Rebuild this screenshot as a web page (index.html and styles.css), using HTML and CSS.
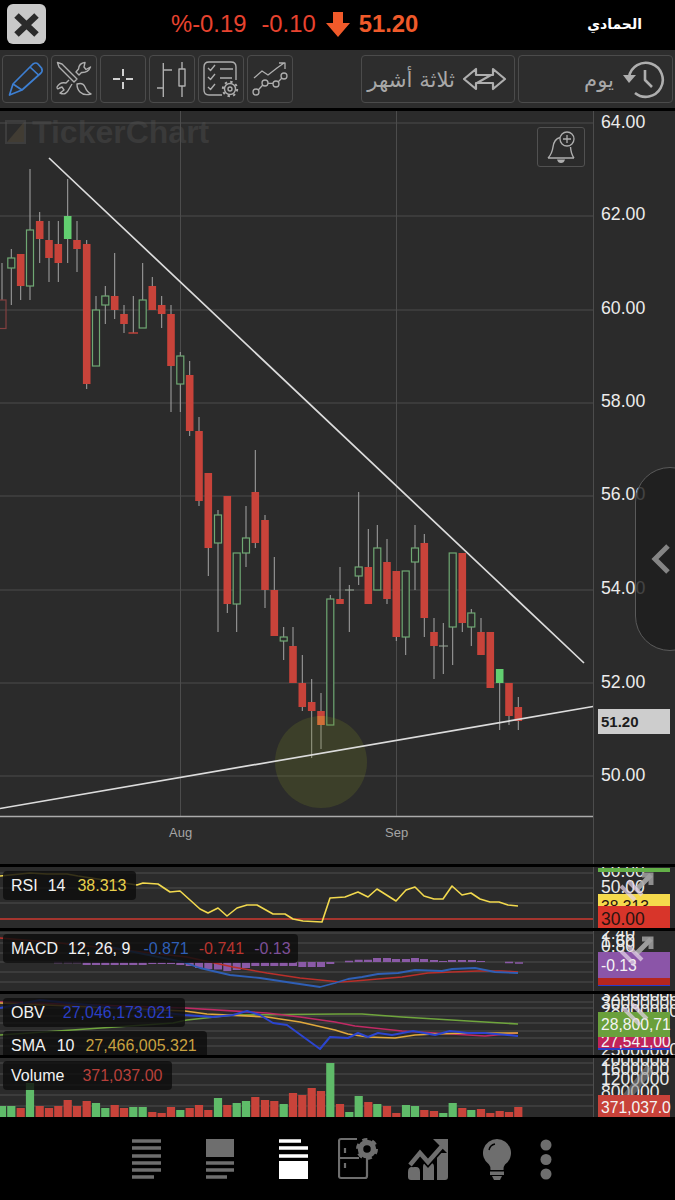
FILE: index.html
```html
<!DOCTYPE html>
<html lang="ar">
<head>
<meta charset="utf-8">
<title>TickerChart</title>
<link rel="stylesheet" href="styles.css">
</head>
<body>
<header class="quote-bar">
  <button class="close-btn" aria-label="close"><svg width="39" height="40" viewBox="7 4 39 40"><path class="close-x" d="M16.5 15.5 36.5 34.5M36.5 15.5 16.5 34.5"/></svg></button>
  <div class="quote">
    <span class="q-red">%-0.19</span>
    <span class="q-red">-0.10</span>
    <svg class="q-arrow" width="24" height="25" viewBox="326 13 24 25"><path class="fill-orange" d="M333 13H343V24H350L338 38 326 24H333Z"/></svg>
    <span class="q-last">51.20</span>
  </div>
  <div class="name">الحمادي</div>
</header>

<nav class="toolbar">
  <div class="tool"><svg width="46" height="48" viewBox="2 55 46 48"><path class="ic-blue" d="M9.5 95 13 84 33 64Q36 62 38 64L41.5 68Q43 71 41 73L22 90ZM13 84 22 90M30 67 38.5 75"/></svg></div>
  <div class="tool"><svg width="46" height="48" viewBox="51 55 46 48"><path class="ic" d="M57.5 62.5 62 64 77 79 74 82 59 67ZM77 84Q83 82 85 87 87 92 91 94 84 96 80 92 77 89 77 84ZM85 62.5Q79 63 78.5 69L76 72 79 75 81.5 72.5Q88 73 90.5 67L86 69.5 84 67ZM69 80 66 83Q60 81.5 57 87 57 90 59.5 88L62 87 64 90 60 93Q66 96 69 89L72 84"/></svg></div>
  <div class="tool"><svg width="46" height="48" viewBox="100 55 46 48"><path class="ic-w" d="M113 79H120M126 79H133M123 69V76M123 82V89"/></svg></div>
  <div class="tool"><svg width="46" height="48" viewBox="149 55 46 48"><path class="ic" d="M163.3 63V97M163.3 70H172M157 88H163.3M182 62V69M182 86V97"/><rect class="ic" x="179" y="69" width="6" height="17"/></svg></div>
  <div class="tool"><svg width="46" height="48" viewBox="198 55 46 48"><path class="ic" d="M222 95H209Q204 95 204 90V67Q204 62 209 62H231Q236 62 236 67V80M208 68 210.500 70.500 215 65M208 77 210.500 79.500 215 74M208 87 210.500 89.500 215 84M220 69H233M220 78H232"/><circle class="ic" cx="230" cy="89" r="5.500"/><circle class="gear-teeth" cx="230" cy="89" r="7.200"/><circle class="ic" cx="230" cy="89" r="2"/></svg></div>
  <div class="tool"><svg width="46" height="48" viewBox="247 55 46 48"><path class="ic-thin" d="M254 78 262 71 268 75 277 68 284 63M279 63H285V69M258.200 90 262.800 85M268 83.300H273M278 82 282 78"/><circle class="ic-thin" cx="256" cy="92" r="3"/><circle class="ic-thin" cx="265" cy="83" r="3"/><circle class="ic-thin" cx="276" cy="84" r="3"/><circle class="ic-thin" cx="284" cy="76" r="3"/></svg></div>
  <div class="tool tool-wide tool-range">
    <span class="tool-label">ثلاثة أشهر</span>
    <svg width="44" height="24" viewBox="464 67 44 24"><path class="ic ic-arrows" d="M465 79 477 69V75H494V69L506 79 494 89V83H477V89ZM478 83 492 75"/></svg>
  </div>
  <div class="tool tool-wide tool-period">
    <span class="tool-label">يوم</span>
    <svg width="44" height="40" viewBox="620 59 44 40"><path class="ic-heavy" d="M627 77A17 17 0 1 1 633 93M643 70V80L650 87"/><path class="fill-icon" d="M621 75H634L627 83Z"/></svg>
  </div>
</nav>

<main class="chart">
  <svg class="stage" width="675" height="753" viewBox="0 111 675 753">
    <text class="wm" x="32" y="143">TickerChart</text>
    <rect class="wm-box" x="6" y="121" width="19" height="22"/>
    <path class="wm-tri" d="M7 142 24 122V142Z"/>
    <path class="grid" d="M0 123H593M0 216H593M0 310H593M0 403H593M0 496H593M0 590H593M0 683H593M0 776H593M180.500 111V817M396.500 111V817M593.500 111V864"/>
    <path class="wick" d="M2 263V300M11.300 249V305M20.700 286V300M30 169V300M39.700 212V263M49 221V282M58.300 221V282M67.700 179V263M77 221V272M86.700 240V389M96 296V310M105.300 286V324M114.700 253V319M124 305V333M133.300 296V333M142.700 263V300M152.300 277V310M161.700 296V328M171 305V412M180.300 352V412M189.700 361V436M199 417V506M208.300 548V576M218 510V632M227.300 604V613M236.700 604V632M246 506V567M255.300 450V548M265 515V608M274.300 557V590M283.700 627V660M293 627V646M302.300 655V711M311.700 679V758M321 693V749M330.300 595V599M340 567V599M349.300 585V632M358.700 492V585M368.300 529V567M377.300 525V548M387 539V604M396.300 637V641M405.700 637V655M415 525V590M424.300 534V637M434 618V679M443.300 623V674M452.700 627V665M462.300 623V632M471.300 609V646M481 618V632M499.700 683V730M509 716V725M518.300 697V730"/>
    <rect class="hollow-red" x="-3" y="300" width="9" height="28.500"/>
    <g class="hollow">
      <rect x="7.800" y="258" width="7" height="10"/><rect x="26.500" y="230" width="7" height="56"/><rect x="92.500" y="310" width="7" height="56"/><rect x="101.800" y="296" width="7" height="9"/><rect x="139.200" y="300" width="7" height="28"/><rect x="176.800" y="356" width="7" height="28"/><rect x="214.500" y="515" width="7" height="28"/><rect x="233.200" y="553" width="7" height="51"/><rect x="242.500" y="538" width="7" height="15"/><rect x="280.200" y="637" width="7" height="4"/><rect x="326.800" y="599" width="7" height="126"/><rect x="355.200" y="567" width="7" height="9"/><rect x="373.800" y="548" width="7" height="42"/><rect x="402.200" y="571" width="7" height="66"/><rect x="411.500" y="548" width="7" height="14"/><rect x="449.200" y="553" width="7" height="74"/><rect x="467.800" y="613" width="7" height="14"/>
    </g>
    <path class="body-red" d="M20.700 254V286M39.700 221V239M49 240V258M58.300 244V263M77 240V249M86.700 244V384M114.700 296V310M124 314V324M152.300 286V310M161.700 305V314M171 314V366M189.700 375V431M199 431V501M208.300 473V548M227.300 496V604M255.300 492V543M265 520V590M274.300 590V636M293 646V683M302.300 683V707M311.700 702V711M321 711V716M340 599V604M368.300 567V604M387 562V599M396.300 571V637M424.300 543V618M434 632V646M462.300 553V623M481 632V655M490.300 632V688M509 683V716M518.300 707V721"/>
    <path class="body-lit" d="M321 716V725"/>
    <path class="body-green" d="M67.700 216V239M499.700 669V683"/>
    <path class="doji-red" d="M128.500 333H138"/>
    <path class="doji-green" d="M345 590H354M439 646H448"/>
    <circle class="marker" cx="321" cy="762" r="46"/>
    <path class="trend" d="M49 158 584 663M0 808.500 593 706.500"/>
    <path class="baseline" d="M0 816.500H593"/>
    <g class="y-label">
      <text x="601" y="128">64.00</text><text x="601" y="220">62.00</text><text x="601" y="314">60.00</text><text x="601" y="407">58.00</text><text x="601" y="500">56.00</text><text x="601" y="594">54.00</text><text x="601" y="688">52.00</text><text x="601" y="781">50.00</text>
    </g>
    <text class="x-label" x="169" y="837">Aug</text>
    <text class="x-label" x="385" y="837">Sep</text>
  </svg>
  <button class="bell" aria-label="alert"><svg width="46" height="38" viewBox="538 128 46 38"><path class="ic" d="M548 158Q552 154 553 147 554 139 560 137.500M560 158H548M574 158H560M574 158Q571 154 570.500 147"/><path class="fill-icon" d="M557 159.500H565Q564 163 561 163 558 163 557 159.500Z"/><circle class="ic-thin" cx="567" cy="139" r="7"/><path class="ic-thin" d="M563 139H571M567 135V143"/></svg></button>
  <div class="drawer"><svg width="20" height="32" viewBox="0 0 20 32"><path class="chev" d="M17 3 4 16 17 29"/></svg></div>
  <div class="last-tag">51.20</div>
</main>

<section class="panel panel-rsi">
  <svg width="675" height="61" viewBox="0 867 675 61">
    <path class="p-grid" d="M0 873H593M0 888H593M0 903H593M593.500 867V928"/>
    <path class="line-red" d="M0 919H593"/>
    <polyline class="line-yellow" points="0,876 20,874 30,873 47,874 67,874 78,876 137,885 143,883 158,884 170,892 180,891 200,909 208,913 218,908 227,916 237,908 247,905 257,905 273,914 285,914 293,919 303,921 322,922 330,898 345,897 358,892 368,897 377,889 396,901 406,890 415,887 424,896 434,899 443,899 452,886 462,895 471,893 480,899 490,902 499,902 508,905 518,906"/>
    <text class="a-text" x="601" y="877">60.00</text>
    <text class="a-text" x="601" y="893">50.00</text>
    <rect class="c-green" x="598" y="868" width="72" height="4"/>
    <rect class="c-yellow" x="598" y="894" width="72" height="12"/>
    <text class="a-box a-dark" x="601" y="912">38.313</text>
    <rect class="c-red" x="598" y="906" width="72" height="22"/>
    <text class="a-text a-dark" x="601" y="925">30.00</text>
    <g class="expand"><path class="exp-head" d="M642 875H651V885"/><path class="exp-line" d="M651 875 636 890"/><path class="exp-chev" d="M621 886 635 900M628 881 642 895"/></g>
  </svg>
  <div class="legend legend-rsi"><span>RSI</span><span>14</span><span class="v-yellow">38.313</span></div>
</section>

<section class="panel panel-macd">
  <svg width="675" height="60" viewBox="0 931 675 60">
    <path class="p-grid" d="M0 933H593M0 943H593M0 953H593M0 962H593M0 972H593M0 982H593M593.500 931V991"/>
    <path class="hist" d="M86.700 962V965M96 962V965M105.300 962V965M114.700 962V965M124 962V965M133.300 962V965M142.700 962V965M152.300 962V964M161.700 962V964M171 962V964M180.300 962V965M189.700 962V966M199 962V968M208.300 962V969M218 962V969.500M227.300 962V971M236.700 962V970M246 962V968M255.300 962V966M265 962V966M274.300 962V966M283.700 962V966M293 962V966M302.300 962V967M311.700 962V967M321 962V967M330.300 962V964M358.700 962V959.700M368 962V959.700M377 962V958M387 962V958M396 962V959M406 962V959M415 962V958M424 962V959M434 962V960M443 962V961M452 962V960M462 962V960M472 962V960M481 962V961"/>
    <path class="hist-dash" d="M54 962.500H62M64 962.500H72M73 962.500H81M345 961.500H353M505 962.500H513M515 963H523"/>
    <polyline class="line-macd-r" points="0,938 60,943 187,957 233,967 267,973 300,978 340,982 355,981 378,979 402,977 428,973 452,972 478,971 502,971 518,972"/>
    <polyline class="line-macd-b" points="100,945 183,962 200,968 230,975 260,978 293,983 320,987 335,983 348,979 362,977 378,974 398,973 415,970 442,971 452,969 475,968 495,972 518,973"/>
    <text class="a-text" x="601" y="939">2.40</text>
    <text class="a-text" x="601" y="947">1.60</text>
    <text class="a-text" x="601" y="952">0.80</text>
    <rect class="c-purple" x="598" y="952" width="72" height="26"/>
    <rect class="c-dred" x="598" y="978" width="72" height="7"/>
    <rect class="c-blue" x="598" y="985" width="72" height="1"/>
    <text class="a-box" x="601" y="971">-0.13</text>
    <g class="expand"><path class="exp-head" d="M642 939H651V949"/><path class="exp-line" d="M651 939 636 954"/><path class="exp-chev" d="M621 951 635 965M628 946 642 960"/></g>
  </svg>
  <div class="legend legend-macd"><span>MACD</span><span>12, 26, 9</span><span class="v-blue">-0.871</span><span class="v-red">-0.741</span><span class="v-purple">-0.13</span></div>
</section>

<section class="panel panel-obv">
  <svg width="675" height="61" viewBox="0 994 675 61">
    <path class="p-grid" d="M0 1002H593M0 1008H593M0 1016H593M0 1023H593M0 1031H593M0 1038H593M0 1046H593M593.500 994V1055"/>
    <polyline class="line-green" points="0,1035 173,1023 187,1020 233,1015 340,1014 362,1014 402,1017 435,1019 468,1021 518,1024"/>
    <polyline class="line-pink" points="0,1002 185,1008 267,1013 300,1017 335,1022 355,1026 402,1031 435,1033 485,1036 518,1033"/>
    <polyline class="line-orange" points="0,1003 185,1011 207,1014 267,1017 300,1022 335,1030 348,1034 368,1037 395,1038 415,1035 435,1034 468,1033 518,1033"/>
    <polyline class="line-blue" points="0,1008 40,1000 185,1015 213,1017 233,1015 247,1011 260,1015 273,1023 287,1025 320,1049 330,1037 348,1038 358,1033 368,1037 378,1033 392,1035 413,1031 435,1035 450,1031 468,1033 485,1033 518,1036"/>
    <text class="a-text" x="601" y="1001">32000000</text>
    <text class="a-text" x="601" y="1009">30000000</text>
    <text class="a-text" x="601" y="1017">28000000</text>
    <text class="a-text" x="601" y="1056">25000000</text>
    <rect class="c-pink" x="598" y="1037" width="72" height="11"/>
    <rect class="c-blue" x="598" y="1048" width="72" height="2"/>
    <text class="a-box" x="601" y="1047">27,541,00</text>
    <rect class="c-ogreen" x="598" y="1012" width="72" height="25"/>
    <text class="a-box" x="601" y="1030">28,800,71</text>
    <g class="expand"><path class="exp-chev" d="M623 1008 640 1025M632 1004 647 1019"/></g>
  </svg>
  <div class="legend legend-obv"><span class="l-name">OBV</span><span class="v-navy">27,046,173.021</span></div>
  <div class="legend legend-sma"><span>SMA</span><span>10</span><span class="v-gold">27,466,005.321</span></div>
</section>

<section class="panel panel-vol">
  <svg width="675" height="59" viewBox="0 1058 675 59">
    <path class="p-grid" d="M0 1063H593M0 1074H593M0 1085H593M0 1095H593M0 1106H593M593.500 1058V1117"/>
    <path class="bar-green" d="M2 1106V1117M11.300 1106V1117M30 1083V1117M96 1103V1117M105.300 1108V1117M133.300 1107V1117M142.700 1107V1117M180.300 1110V1117M218 1098V1117M236.700 1103V1117M246 1101V1117M283.700 1104V1117M330.300 1063V1117M349.300 1112V1117M358.700 1096V1117M377.300 1104V1117M406 1105V1117M415 1106V1117M443.300 1113V1117M452.700 1103V1117M471.300 1110V1117"/>
    <path class="bar-red" d="M20.700 1108V1117M39.700 1106V1117M49 1108V1117M58.300 1106V1117M67.700 1100V1117M77 1106V1117M86.700 1101V1117M114.700 1105V1117M124 1108V1117M152.300 1112V1117M161.700 1113V1117M171 1107V1117M189.700 1108V1117M199 1105V1117M208.300 1110V1117M227.300 1105V1117M255.300 1097V1117M265 1100V1117M274.300 1101V1117M293 1093V1117M302.300 1095V1117M311.700 1088V1117M321 1091V1117M340 1104V1117M368.300 1102V1117M387 1106V1117M396.300 1113V1117M424.300 1110V1117M434 1111V1117M462.300 1108V1117M481 1109V1117M490.300 1113V1117M499.700 1111V1117M509 1112V1117M518.300 1107V1117"/>
    <text class="a-text" x="601" y="1066">2000000</text>
    <text class="a-text" x="601" y="1075">1600000</text>
    <text class="a-text" x="601" y="1085">1200000</text>
    <text class="a-text" x="601" y="1098">800000</text>
    <g class="expand"><path class="exp-line exp-muted" d="M626 1098 650 1068"/></g>
    <rect class="c-vred" x="598" y="1095" width="72" height="22"/>
    <text class="a-box" x="601" y="1113">371,037.0</text>
  </svg>
  <div class="legend legend-vol"><span class="l-name">Volume</span><span class="v-volred">371,037.00</span></div>
</section>

<footer class="nav">
  <svg width="74" height="82" viewBox="132 1118 74 82"><path class="nav-bar" d="M132 1141H161M132 1148H161M132 1156H161M132 1163H161M132 1170H161M132 1177H154"/></svg>
  <svg width="73" height="82" viewBox="206 1118 73 82"><rect class="fill-nav" x="206" y="1139" width="28" height="18"/><path class="nav-bar" d="M206 1163H234M206 1170H234M206 1177H227"/></svg>
  <svg width="59" height="82" viewBox="279 1118 59 82"><path class="nav-bar-on" d="M279 1141H301M279 1148H308M279 1156H308"/><rect class="fill-white" x="279" y="1161" width="29" height="18"/></svg>
  <svg width="70" height="82" viewBox="338 1118 70 82"><path class="nav-line" d="M357 1139H341Q339 1139 339 1141V1176Q339 1178 341 1178H365Q367 1178 367 1176V1158M339 1158H359M345 1148V1153M345 1163V1168"/><circle class="nav-gear" cx="367" cy="1149" r="6.500"/><circle class="nav-gear-teeth" cx="367" cy="1149" r="9.500"/></svg>
  <svg width="75" height="82" viewBox="408 1118 75 82"><path class="fill-nav" d="M408 1172Q408 1167 412 1167H416Q420 1167 420 1172V1180H411Q408 1180 408 1177ZM423 1167Q423 1163 426 1163H431Q434 1163 434 1167V1180H423ZM437 1157Q437 1153 440 1153H448V1177Q448 1180 445 1180H437Z"/><path class="nav-cut" d="M410 1165 420 1153 428 1162 443 1145"/><path class="nav-zig" d="M410 1165 420 1153 428 1162 443 1145"/><path class="fill-nav" d="M433 1139H448V1154Z"/></svg>
  <svg width="57" height="82" viewBox="483 1118 57 82"><path class="fill-nav" d="M497 1139A14 14 0 0 1 505 1164.500Q503.500 1166 503.500 1170H490.500Q490.500 1166 489 1164.500A14 14 0 0 1 497 1139ZM490 1171.500H504V1175H490ZM492 1176H502L500 1180H494Z"/><path class="bulb-shine" d="M489 1150Q490 1145 495 1144"/></svg>
  <svg width="12" height="82" viewBox="540 1118 12 82"><circle class="fill-nav" cx="546" cy="1145" r="5.500"/><circle class="fill-nav" cx="546" cy="1159.500" r="5.500"/><circle class="fill-nav" cx="546" cy="1174" r="5.500"/></svg>
</footer>
</body>
</html>
```
FILE: styles.css
```css
* { box-sizing: border-box; }
html, body { margin: 0; padding: 0; }
body {
  width: 675px;
  height: 1200px;
  overflow: hidden;
  background: #000;
  font-family: "Liberation Sans", Arial, sans-serif;
  direction: ltr;
}
svg { display: block; }

/* quote bar */
.quote-bar { height: 50px; display: flex; align-items: center; padding: 0 33px 2px 7px; background: #000; }
.close-btn { width: 39px; height: 40px; padding: 0; border: 0; border-radius: 6px; background: #c9c9c9; }
.close-x { fill: none; stroke: #2b2b2b; stroke-width: 6.5; }
.quote { display: flex; align-items: center; margin-left: 125px; }
.q-red { color: #e8432f; font-size: 23.8px; margin-right: 15px; }
.q-arrow { margin: 0 9px 0 -5px; }
.q-last { color: #f05a2a; font-size: 23.8px; font-weight: 700; }
.fill-orange { fill: #f05a2a; }
.name { margin-left: auto; color: #fff; font: 700 14px "DejaVu Sans", sans-serif; }

/* toolbar */
.toolbar { height: 58px; margin-bottom: 3px; padding: 5px 3px 5px 2px; display: flex; gap: 3px; background: #2d2d2d; }
.tool { width: 46px; height: 48px; border: 1px solid #4b4b4b; border-radius: 4px; flex: none; position: relative; }
.tool svg { margin: -1px; }
.tool-wide { display: flex; align-items: center; justify-content: flex-end; height: 48px; }
.tool-wide svg { margin: 0; }
.tool-range { width: 154px; margin-left: 65px; gap: 8px; padding-right: 7px; }
.tool-period { width: 155px; gap: 8px; padding-right: 6px; }
.tool-label { color: #a8a8a8; font: 400 21.2px "DejaVu Sans", sans-serif; }
.ic, .ic-thin, .ic-heavy, .ic-w, .ic-blue { fill: none; stroke: #aeaeae; stroke-width: 1.4; stroke-linejoin: round; }
.ic-arrows { stroke-width: 2.2; }
.ic-thin { stroke-width: 1.3; }
.ic-heavy { stroke-width: 2.6; }
.ic-w { stroke: #d0d0d0; stroke-width: 2; }
.ic-blue { stroke: #3d7fd2; stroke-width: 1.7; }
.fill-icon { fill: #aeaeae; }
.gear-teeth { fill: none; stroke: #aeaeae; stroke-width: 2; stroke-dasharray: 2.4 3.25; }

/* main chart */
.chart { position: relative; height: 753px; overflow: hidden; background: #2b2b2b; }
.stage { font-family: "Liberation Sans", Arial, sans-serif; }
.wm { font-size: 32px; font-weight: 700; fill: #3a3a3a; }
.wm-box { fill: none; stroke: #3d3d3d; stroke-width: 2; }
.wm-tri { fill: #413c33; }
.grid { fill: none; stroke: #4c4c4c; stroke-width: 1; }
.wick { fill: none; stroke: #a6a6a6; stroke-width: 1; }
.hollow rect { fill: #2b2b2b; stroke: #6fa873; stroke-width: 1.2; }
.hollow-red { fill: none; stroke: #824040; stroke-width: 1.2; }
.body-red { fill: none; stroke: #c8433a; stroke-width: 7.6; }
.body-lit { fill: none; stroke: #e8683e; stroke-width: 7.6; }
.body-green { fill: none; stroke: #62cf70; stroke-width: 7.6; }
.doji-red { fill: none; stroke: #c8433a; stroke-width: 1.4; }
.doji-green { fill: none; stroke: #9aa99a; stroke-width: 1.2; }
.marker { fill: #7c8a26; fill-opacity: .22; }
.trend { fill: none; stroke: #dcdcdc; stroke-width: 1.7; }
.baseline { fill: none; stroke: #ababab; stroke-width: 1.6; }
.y-label text { font-size: 17.7px; fill: #ececec; }
.x-label { font-size: 13px; fill: #a5a5a5; }
.bell { position: absolute; left: 537px; top: 16px; width: 48px; height: 40px; padding: 0; border: 1px solid #515151; border-radius: 3px; background: #2b2b2b; }
.drawer { position: absolute; left: 635px; top: 356px; width: 70px; height: 184px; padding: 75px 0 0 15px; border: 1px solid #5a5a5a; border-radius: 46px; background: rgba(31, 31, 31, .82); }
.chev { fill: none; stroke: #858585; stroke-width: 5; }
.last-tag { position: absolute; left: 598px; top: 598px; width: 72px; height: 25px; padding-left: 3px; background: #cdcdcd; color: #1c1c1c; font-size: 15px; font-weight: 700; line-height: 26px; }

/* indicator panels */
.panel { position: relative; margin-top: 3px; overflow: hidden; background: #2b2b2b; }
.panel-rsi { height: 61px; }
.panel-macd { height: 60px; }
.panel-obv { height: 61px; }
.panel-vol { height: 59px; }
.p-grid { fill: none; stroke: #4e4e4e; stroke-width: 1; }
polyline { fill: none; stroke-linejoin: round; }
.line-red { fill: none; stroke: #cf3a30; stroke-width: 1.3; }
.line-yellow { stroke: #f2d94e; stroke-width: 1.6; }
.line-macd-r { stroke: #b92f2a; stroke-width: 1.6; }
.line-macd-b { stroke: #2f5fb5; stroke-width: 1.8; }
.hist { fill: none; stroke: #8a5aa6; stroke-width: 8; }
.hist-dash { fill: none; stroke: #8a5aa6; stroke-width: 1.4; }
.line-green { stroke: #6fa53d; stroke-width: 1.6; }
.line-pink { stroke: #c02a64; stroke-width: 1.6; }
.line-orange { stroke: #e0a83c; stroke-width: 1.7; }
.line-blue { stroke: #2b45d0; stroke-width: 2; }
.bar-green { fill: none; stroke: #5fbb69; stroke-width: 8.200; }
.bar-red { fill: none; stroke: #c8433a; stroke-width: 8.200; }
.a-text { font-size: 17.5px; fill: #ececec; font-family: "Liberation Sans", Arial, sans-serif; }
.a-box { font-size: 15.7px; fill: #f4f4f4; font-family: "Liberation Sans", Arial, sans-serif; }
.a-dark { fill: #2a1410; }
.c-green { fill: #63b048; }
.c-yellow { fill: #f5da4c; }
.c-red { fill: #d8352a; }
.c-purple { fill: #8b55a8; }
.c-dred { fill: #b5261e; }
.c-blue { fill: #2c3bc8; }
.c-pink { fill: #c0245a; }
.c-ogreen { fill: #6aa03c; }
.c-vred { fill: #c8423a; }
.expand { opacity: .9; }
.exp-head { fill: none; stroke: #9a9a9a; stroke-width: 5; }
.exp-line { fill: none; stroke: #aaa; stroke-width: 5; }
.exp-muted { stroke: #888; stroke-width: 9; opacity: .6; }
.exp-chev { fill: none; stroke: #e3d3e6; stroke-width: 4; opacity: .8; }

.legend { position: absolute; left: 3px; display: flex; gap: 10px; align-items: center; padding: 0 8px; height: 29px; border-radius: 4px; background: rgba(14, 14, 14, .82); color: #f2f2f2; font-size: 16px; white-space: nowrap; }
.legend-rsi { top: 4px; width: 133px; }
.legend-rsi span:last-child { margin-left: 2px; }
.legend-macd { top: 3px; width: 295px; }
.legend-obv { top: 4px; width: 182px; }
.legend-sma { top: 37px; width: 204px; gap: 11px; }
.legend-vol { top: 3px; width: 169px; }
.legend-macd span:nth-child(2) { margin-right: 3px; }
.l-name { margin-right: 8px; }
.v-yellow { color: #e8d04c; }
.v-blue { color: #2f5fb5; }
.v-red { color: #b8352f; }
.v-purple { color: #7d5098; }
.v-navy { color: #2a3fc4; }
.v-gold { color: #c9a140; }
.v-volred { color: #b8403b; }

/* bottom nav */
.nav { display: flex; height: 82px; margin-top: 1px; padding-left: 132px; background: #000; }
.nav-bar { fill: none; stroke: #6e6e6e; stroke-width: 3.4; }
.nav-bar-on { fill: none; stroke: #fff; stroke-width: 3.4; }
.fill-nav { fill: #6e6e6e; }
.fill-white { fill: #fff; }
.nav-line { fill: none; stroke: #6e6e6e; stroke-width: 2.200; }
.nav-gear { fill: none; stroke: #6e6e6e; stroke-width: 5.500; }
.nav-gear-teeth { fill: none; stroke: #6e6e6e; stroke-width: 3; stroke-dasharray: 5 4.950; }
.nav-cut { fill: none; stroke: #000; stroke-width: 8; }
.nav-zig { fill: none; stroke: #6e6e6e; stroke-width: 4.500; }
.bulb-shine { fill: none; stroke: #000; stroke-width: 1.4; }
```
